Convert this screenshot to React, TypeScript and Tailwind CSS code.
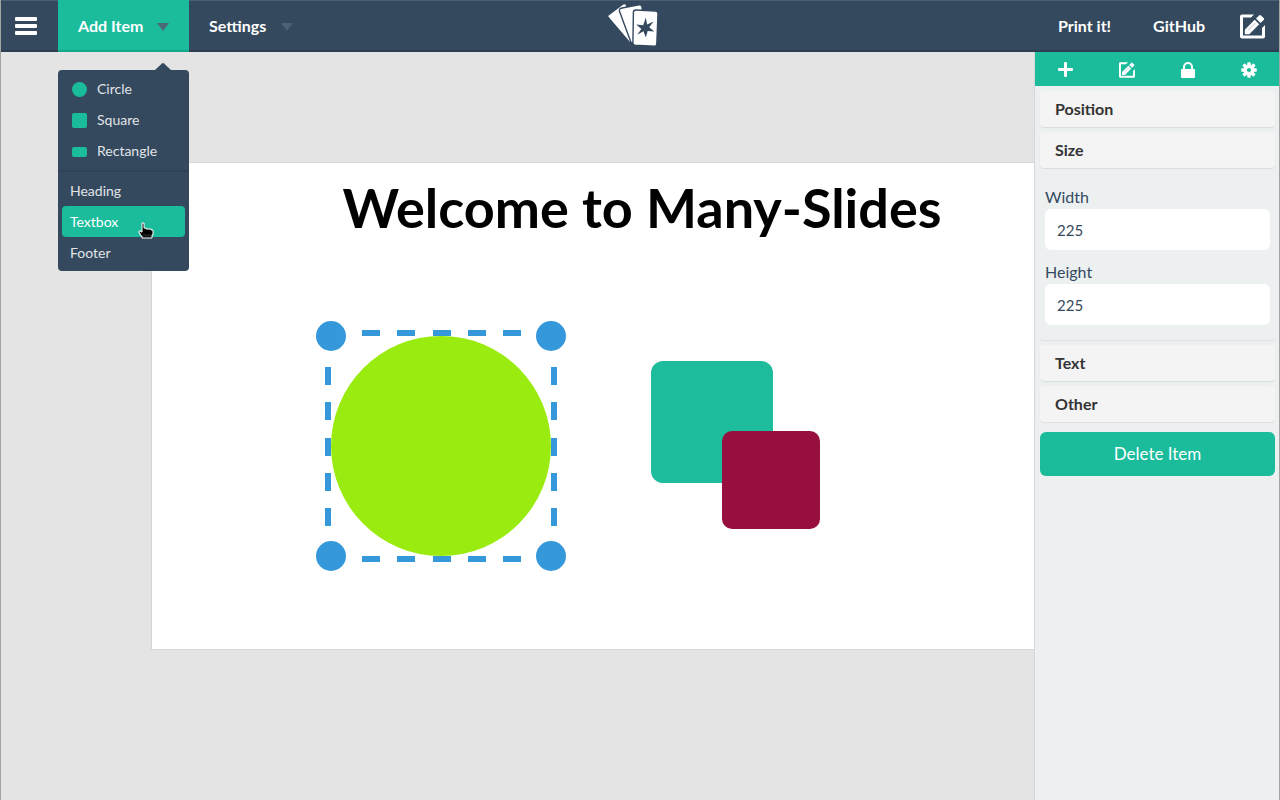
import React from 'react';

function MenuIcon() {
  return (
    <svg width="22" height="18" viewBox="0 0 22 18" fill="currentColor" aria-hidden="true">
      <rect x="0" y="0" width="22" height="4" rx="1" />
      <rect x="0" y="7" width="22" height="4" rx="1" />
      <rect x="0" y="14" width="22" height="4" rx="1" />
    </svg>
  );
}

function EditIcon({ className }: { className: string }) {
  return (
    <svg className={className} viewBox="0 0 25 25" aria-hidden="true">
      <path
        d="M14 0.5H2Q0 0.5 0 2.5V22.5Q0 24.5 2 24.5H23Q25 24.5 25 22.5V11L22 14V21.5H3V3.5H11Z"
        fill="currentColor"
      />
      <path d="M4.8 15.7 14.7 5.8 19.2 10.3 9.3 20.2H4.8Z" fill="currentColor" />
      <path d="M16 4.5 19 1.4Q20 0.5 21 1.4L23.7 4.1Q24.6 5 23.7 6L20.5 9Z" fill="currentColor" />
      <path d="M8.5 16 15.5 9" stroke="#34495e" strokeOpacity="0.35" strokeWidth="1" />
    </svg>
  );
}

function PlusIcon() {
  return (
    <svg width="15" height="15" viewBox="0 0 15 15" fill="currentColor" aria-hidden="true">
      <rect x="6" y="0" width="3" height="15" rx="1" />
      <rect x="0" y="6" width="15" height="3" rx="1" />
    </svg>
  );
}

function LockIcon() {
  return (
    <svg width="14" height="16" viewBox="0 0 14 16" aria-hidden="true">
      <path d="M3 8V5A4 4 0 0 1 11 5V8" fill="none" stroke="currentColor" strokeWidth="2" />
      <rect x="0" y="7" width="14" height="9" rx="1" fill="currentColor" />
    </svg>
  );
}

function GearIcon() {
  return (
    <svg width="16" height="16" viewBox="-8 -8 16 16" fill="currentColor" aria-hidden="true">
      {[0, 45, 90, 135].map((angle) => (
        <rect key={angle} x="-1.7" y="-7.8" width="3.4" height="15.6" rx="0.8" transform={`rotate(${angle})`} />
      ))}
      <circle r="5.6" />
      <circle r="2.1" fill="#1abc9c" />
    </svg>
  );
}

function Logo() {
  return (
    <svg width="52" height="44" viewBox="0 0 52 44" aria-hidden="true">
      <g fill="#fff" stroke="#34495e" strokeWidth="1.4" strokeLinejoin="round">
        <path d="M2 11.5 16 1Q18 -0.2 19.5 1.8L24 40 22.5 39.5 1.2 14.5Q-0.2 12.8 2 11.5Z" />
        <path d="M15 5 32 1.8Q34.5 1.5 35 3.8L37 42 24 39.5 12.4 8Q11.8 5.8 15 5Z" />
        <path d="M29 7 48.5 8Q51 8.2 51 10.5L49.8 41Q49.6 43.2 47.2 43.2L28 42.2Q25.8 42 25.9 39.8L26.4 9.2Q26.5 6.9 29 7Z" />
      </g>
      <path
        d="M38.8 14.6 40.1 21.4 46.6 18.6 42.2 24.2 47.2 28.6 40.7 27.9 38.8 34.6 36.5 28.3 30.2 31.8 34.3 26 29.3 21.4 36.2 22.3Z"
        fill="#34495e"
      />
    </svg>
  );
}

function HandCursor() {
  return (
    <svg width="17" height="17" viewBox="0 0 17 17" aria-hidden="true">
      <path
        d="M4 1H6V6H8V7H10V7H13V8H15V13H14V16H4V14H3V13H2V11H1V9H3V10H4Z"
        fill="#000"
        stroke="#fff"
        strokeWidth="1"
      />
      <path d="M6 12V15M8 12V15M10 12V15M12 12V15" stroke="#555" strokeWidth="0.6" />
    </svg>
  );
}

function Caret({ className }: { className: string }) {
  return (
    <svg width="12" height="8" viewBox="0 0 12 8" className={className} aria-hidden="true">
      <path d="M0 0H12L6 8Z" fill="currentColor" />
    </svg>
  );
}

const steps = [51, 86, 122, 157, 192];

function SelectedCircle() {
  return (
    <svg width="250" height="250" viewBox="0 0 250 250" className="absolute top-[158px] left-[164px]" role="img" aria-label="Selected circle">
      <g fill="#3498db" transform="translate(-5 0)">
        {steps.map((p) => (
          <React.Fragment key={p}>
            <rect x={p} y="9" width="18" height="6" />
            <rect x={p} y="235" width="18" height="6" />
          </React.Fragment>
        ))}
      </g>
      <g fill="#3498db" transform="translate(0 -5)">
        {steps.map((p) => (
          <React.Fragment key={p}>
            <rect x="9" y={p} width="6" height="18" />
            <rect x="235" y={p} width="6" height="18" />
          </React.Fragment>
        ))}
      </g>
      <circle cx="125" cy="125" r="110" fill="#9aec10" />
      <g fill="#3498db">
        <circle cx="15" cy="15" r="15" />
        <circle cx="235" cy="15" r="15" />
        <circle cx="15" cy="235" r="15" />
        <circle cx="235" cy="235" r="15" />
      </g>
    </svg>
  );
}

function AddMenu() {
  const shapeItem = 'flex h-[31px] w-full items-center gap-[10px] px-[10px] text-left';
  const textItem = 'flex h-[31px] w-full items-center rounded px-2 text-left';
  return (
    <div className="absolute top-[70px] left-0 z-20 w-[131px] rounded bg-[#34495e] text-sm font-normal text-[#e1e4e7]">
      <svg width="16" height="7" viewBox="0 0 16 7" className="absolute -top-[7px] left-[97px]" aria-hidden="true">
        <path d="M0 7 7 0.5Q8 -0.3 9 0.5L16 7Z" fill="#34495e" />
      </svg>
      <ul className="border-b-2 border-[#2f4256] px-1 pt-[3px] pb-1">
        <li>
          <button className={shapeItem}>
            <span className="mt-[2px] size-[15px] rounded-full bg-[#1abc9c]" />
            Circle
          </button>
        </li>
        <li>
          <button className={shapeItem}>
            <span className="mt-[2px] size-[15px] rounded-xs bg-[#1abc9c]" />
            Square
          </button>
        </li>
        <li>
          <button className={shapeItem}>
            <span className="mt-[2px] h-[10px] w-[15px] rounded-xs bg-[#1abc9c]" />
            Rectangle
          </button>
        </li>
      </ul>
      <ul className="px-1 pt-[3px] pb-[3px]">
        <li>
          <button className={textItem}>Heading</button>
        </li>
        <li className="relative">
          <button className="flex h-[31px] w-full items-center rounded bg-[#1abc9c] px-2 text-left text-white">Textbox</button>
          <span className="pointer-events-none absolute top-[16px] left-[76px]">
            <HandCursor />
          </span>
        </li>
        <li>
          <button className={textItem}>Footer</button>
        </li>
      </ul>
    </div>
  );
}

function Header() {
  return (
    <header className="relative flex h-[52px] shrink-0 bg-[#34495e] text-base font-bold text-white shadow-[inset_0_1px_0_#4d6073,inset_0_-2px_0_#2c3e50]">
      <button aria-label="Menu" className="flex w-[57px] items-center justify-center pr-[7px]">
        <MenuIcon />
      </button>
      <div className="relative">
        <button className="flex h-[52px] w-[131px] items-center justify-between bg-[#1abc9c] px-5 shadow-[inset_0_-2px_0_#17a689]">
          Add Item
          <Caret className="mt-[2px] text-[#4d6878]" />
        </button>
        <AddMenu />
      </div>
      <button className="flex w-[126px] items-center justify-between pr-[22px] pl-5">
        Settings
        <Caret className="mt-[2px] text-[#4b6075]" />
      </button>
      <div className="absolute top-[3px] left-1/2 -translate-x-[33px]">
        <Logo />
      </div>
      <nav className="ml-auto flex items-center pr-[14px]">
        <a href="#print">Print it!</a>
        <a href="#github" className="ml-[42px]">GitHub</a>
        <button aria-label="Edit" className="ml-[35px]">
          <EditIcon className="size-[25px]" />
        </button>
      </nav>
    </header>
  );
}

function PanelHeader({ children }: { children: React.ReactNode }) {
  return (
    <button className="flex h-[36px] w-full items-center rounded bg-[#f4f4f4] px-[15px] text-left text-base font-bold text-[#333] shadow-[0_1px_1px_rgba(0,0,0,0.08)]">
      {children}
    </button>
  );
}

function Field({ id, label, value }: { id: string; label: string; value: string }) {
  return (
    <div>
      <label htmlFor={id} className="block h-6 text-base leading-6 text-[#34495e]">{label}</label>
      <input
        id={id}
        defaultValue={value}
        className="block h-[41px] w-full rounded-md bg-white px-3 text-[15px] text-[#34495e] outline-none"
      />
    </div>
  );
}

function Sidebar() {
  return (
    <aside className="z-10 w-[245px] shrink-0 border-l border-[#d5d8d8] bg-[#ecf0f1]">
      <div className="grid h-[34px] grid-cols-4 items-center justify-items-center bg-[#1abc9c] pt-px text-white">
        <button aria-label="Add"><PlusIcon /></button>
        <button aria-label="Edit item"><EditIcon className="size-4" /></button>
        <button aria-label="Lock"><LockIcon /></button>
        <button aria-label="Settings"><GearIcon /></button>
      </div>
      <div className="flex flex-col gap-[5px] pt-[5px] pr-1 pl-[5px]">
        <PanelHeader>Position</PanelHeader>
        <section className="rounded shadow-[0_1px_1px_rgba(0,0,0,0.06)]">
          <PanelHeader>Size</PanelHeader>
          <div className="flex flex-col gap-[10px] px-[5px] pt-[17px] pb-[15px]">
            <Field id="width" label="Width" value="225" />
            <Field id="height" label="Height" value="225" />
          </div>
        </section>
        <PanelHeader>Text</PanelHeader>
        <PanelHeader>Other</PanelHeader>
        <button className="mt-[5px] h-11 rounded-md bg-[#1abc9c] text-[17px] text-white">Delete Item</button>
      </div>
    </aside>
  );
}

export default function App() {
  return (
    <div className="flex h-screen flex-col overflow-hidden border-x border-[#a3a3a3] bg-[#e4e4e4] font-['Lato',sans-serif]">
      <Header />
      <div className="flex min-h-0 flex-1">
        <main className="min-w-0 flex-1 overflow-hidden pt-[110px] pl-[150px]">
          <div className="relative h-[488px] w-[982px] border border-[#d6d6d6] bg-white">
            <h1 className="pt-3 text-center text-[54px] leading-[66px] font-bold text-black">Welcome to Many-Slides</h1>
            <SelectedCircle />
            <div className="absolute top-[198px] left-[499px] size-[122px] rounded-xl bg-[#1cbc9c]" />
            <div className="absolute top-[268px] left-[570px] size-[98px] rounded-[10px] bg-[#970f3f]" />
          </div>
        </main>
        <Sidebar />
      </div>
    </div>
  );
}
